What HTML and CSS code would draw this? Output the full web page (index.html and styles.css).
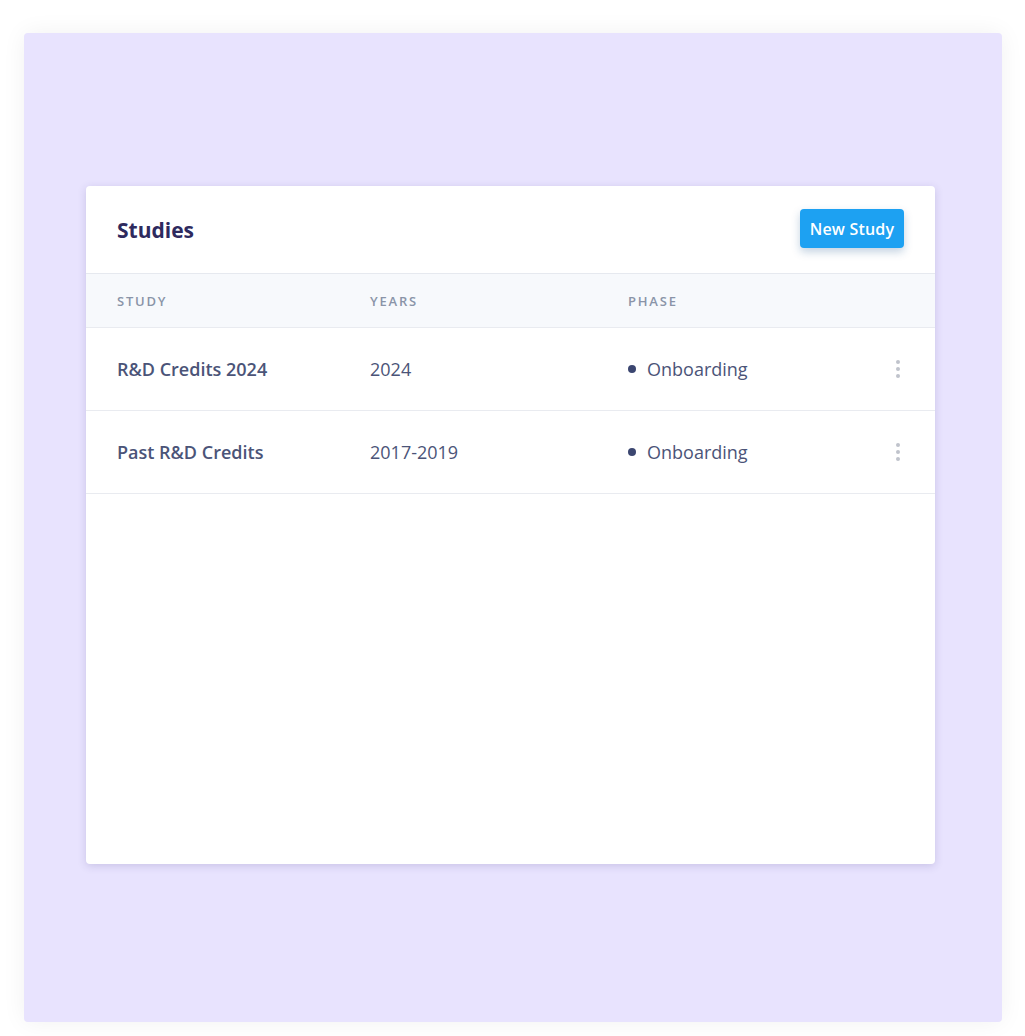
FILE: index.html
```html
<!DOCTYPE html>
<html lang="en">
<head>
  <meta charset="UTF-8">
  <meta name="viewport" content="width=device-width, initial-scale=1.0">
  <title>Studies</title>
  <link rel="stylesheet" href="styles.css">
</head>
<body>
  <div class="panel">
    <div class="card">
      <div class="card-header">
        <h1 class="card-title">Studies</h1>
        <button class="btn-primary">New Study</button>
      </div>

      <div class="table">
        <div class="table-row table-head">
          <div>Study</div>
          <div>Years</div>
          <div>Phase</div>
          <div></div>
        </div>
        <div class="table-row">
          <div class="study-name">R&amp;D Credits 2024</div>
          <div>2024</div>
          <div class="phase"><span class="dot"></span>Onboarding</div>
          <div class="kebab"><span></span><span></span><span></span></div>
        </div>
        <div class="table-row">
          <div class="study-name">Past R&amp;D Credits</div>
          <div>2017-2019</div>
          <div class="phase"><span class="dot"></span>Onboarding</div>
          <div class="kebab"><span></span><span></span><span></span></div>
        </div>
      </div>
    </div>
  </div>
</body>
</html>
```

FILE: styles.css
```css
* {
  box-sizing: border-box;
}

body {
  margin: 0;
  padding: 33px 23px 14px 24px;
  background: #ffffff;
  font-family: "Open Sans", "Noto Sans", sans-serif;
  color: #4b5478;
}

.panel {
  height: 989px;
  background: #e8e3fe;
  border-radius: 4px;
  box-shadow: 0 0 24px rgba(0, 0, 0, 0.06);
  padding: 153px 67px 0 62px;
}

.card {
  height: 678px;
  background: #ffffff;
  border-radius: 4px;
  box-shadow: 0 2px 8px rgba(60, 50, 120, 0.18);
  overflow: hidden;
}

.card-header {
  height: 87px;
  display: flex;
  align-items: center;
  justify-content: space-between;
  padding: 0 31px 0 31px;
}

.card-title {
  margin: 0;
  font-size: 21px;
  font-weight: 700;
  color: #2e2a5e;
}

.btn-primary {
  height: 39px;
  width: 104px;
  margin-top: -2px;
  padding: 0;
  border: none;
  border-radius: 4px;
  background: #1da1f2;
  color: #ffffff;
  font-family: inherit;
  font-size: 16px;
  font-weight: 600;
  letter-spacing: 0.2px;
  box-shadow: 0 4px 8px rgba(20, 80, 140, 0.25);
}

.table-row {
  display: grid;
  grid-template-columns: 253px 258px 1fr 40px;
  align-items: center;
  height: 83px;
  padding: 0 17px 0 31px;
  border-bottom: 1px solid #e9ebf0;
  font-size: 18px;
}

.table-head {
  height: 55px;
  background: #f7f9fc;
  border-top: 1px solid #e6e9ef;
  font-size: 13px;
  font-weight: 600;
  letter-spacing: 1.8px;
  text-transform: uppercase;
  color: #8a94a8;
}

.study-name {
  font-weight: 600;
}

.phase {
  display: flex;
  align-items: center;
}

.dot {
  width: 8px;
  height: 8px;
  border-radius: 50%;
  background: #3b4670;
  margin: 0 11px 0 0;
}

.kebab {
  display: flex;
  flex-direction: column;
  align-items: center;
  gap: 3px;
}

.kebab span {
  width: 4px;
  height: 4px;
  border-radius: 50%;
  background: #c0c3cc;
}
```
